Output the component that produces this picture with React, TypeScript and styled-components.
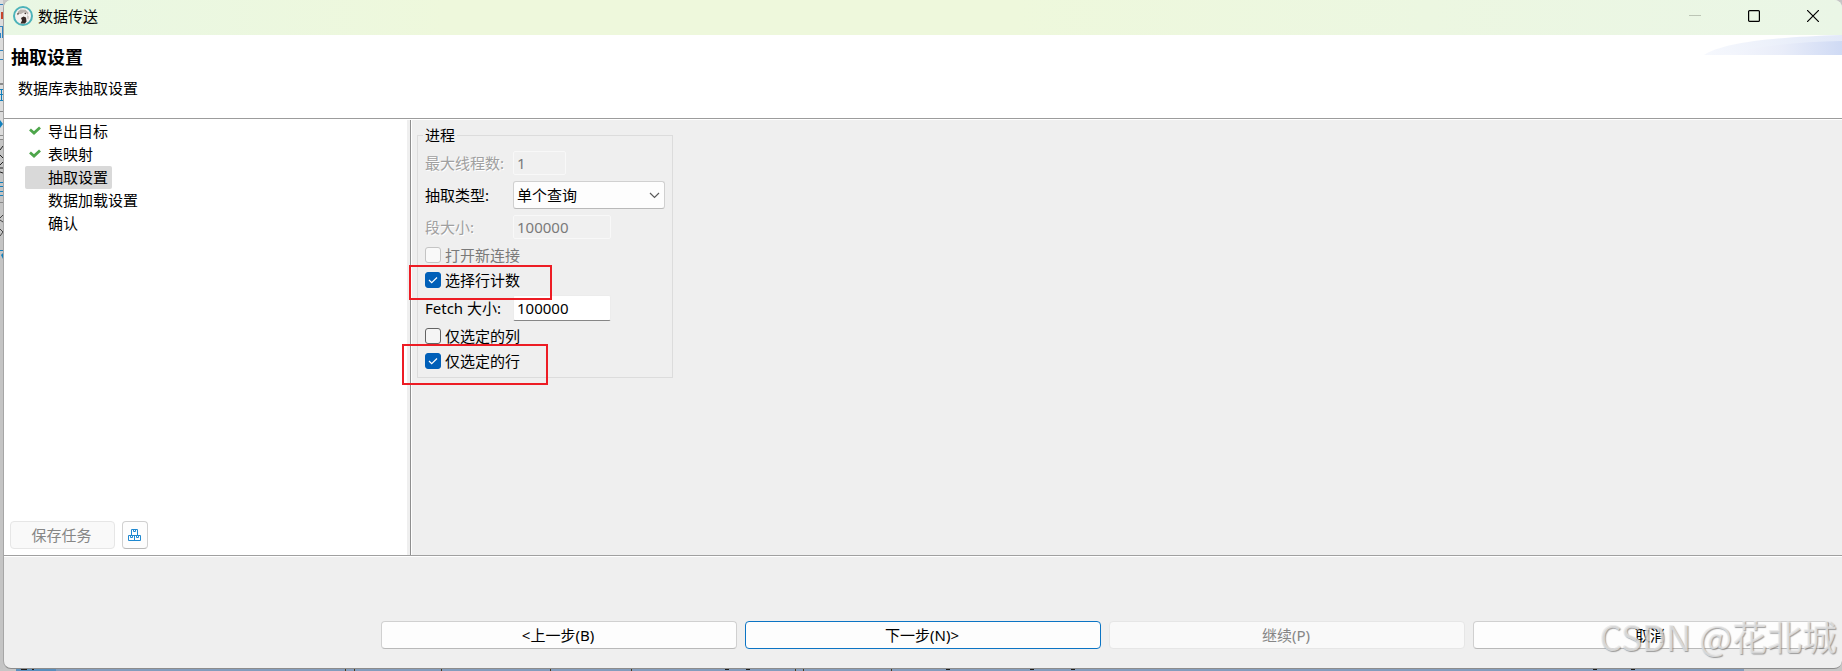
import React from "react";
import styled, { createGlobalStyle, css } from "styled-components";

const GlobalStyle = createGlobalStyle`
  * { box-sizing: border-box; }
  body {
    margin: 0;
    font-family: "Noto Sans", "Noto Sans CJK SC", sans-serif;
    font-size: 15px;
    line-height: 20px;
    color: #000;
  }
  button, input, select { font: inherit; color: inherit; margin: 0; }
`;

const Desktop = styled.div`
  display: grid;
  grid-template-columns: 3px minmax(0, 1fr);
  grid-template-rows: minmax(0, 1fr) 2px;
  min-height: 100vh;
  overflow: hidden;
  background: #c6c6c6;
`;

const LeftEdge = styled.svg`
  display: block;
  width: 3px;
  height: 669px;
`;

const BottomEdge = styled.svg`
  display: block;
  grid-column: 1 / -1;
  width: 100%;
  height: 2px;
`;

const Window = styled.div`
  display: flex;
  flex-direction: column;
  background: #efefef;
  border-left: 1px solid #a6a6a6;
  border-bottom: 1px solid #8c8c8c;
  border-radius: 8px;
  overflow: hidden;
`;

const TitleBar = styled.header`
  display: flex;
  align-items: center;
  height: 35px;
  padding: 0 14px 4px 9px;
  gap: 5px;
  background: linear-gradient(90deg, #e9f7e4 0%, #eef8dc 24%, #eef8dc 55%, #eaf6e6 100%);
`;

const Title = styled.span`
  flex: 1;
`;

const WindowControls = styled.div`
  display: flex;
  gap: 29px;
`;

const ControlButton = styled.button`
  display: grid;
  place-items: center;
  width: 30px;
  height: 20px;
  padding: 0;
  border: 0;
  background: none;
`;

const Heading = styled.section`
  display: flex;
  justify-content: space-between;
  height: 85px;
  background: #fff;
  border-bottom: 1px solid #fff;
  box-shadow: inset 0 -1px #9c9c9c;
`;

const HeadingText = styled.div`
  padding-top: 9px;
`;

const HeadingTitle = styled.h1`
  margin: 0;
  padding-left: 7px;
  font-family: "Noto Sans CJK SC", sans-serif;
  font-size: 18px;
  line-height: 24px;
  font-weight: bold;
`;

const HeadingNote = styled.p`
  margin: 10px 0 0;
  padding-left: 14px;
`;

const Body = styled.div`
  display: flex;
  flex: 1;
`;

const Sidebar = styled.aside`
  display: flex;
  flex-direction: column;
  justify-content: space-between;
  width: 403px;
  background: #fff;
`;

const Sash = styled.div`
  width: 5px;
  border-right: 1px solid #fff;
  box-shadow: inset -1px 0 #8f8f8f;
`;

const Steps = styled.ul`
  margin: 0;
  padding: 0 0 0 21px;
  list-style: none;
`;

const StepButton = styled.button<{ $current?: boolean }>`
  display: grid;
  grid-template-columns: 13px auto;
  gap: 6px;
  align-items: center;
  height: 23px;
  padding: 0 4px 2px;
  border: 0;
  border-radius: 2px;
  background: ${(p) => (p.$current ? "#d9d9d9" : "none")};
`;

const PushButton = styled.button<{ $primary?: boolean }>`
  display: grid;
  place-items: center;
  height: 28px;
  padding: 0 2px 0 0;
  background: #fdfdfd;
  border: 1px solid #d0d0d0;
  border-bottom-color: #b9b9b9;
  border-radius: 4px;
  ${(p) =>
    p.$primary &&
    css`
      border-color: #0b74c4;
    `}
  &:disabled {
    color: #868686;
    background: #f9f9f9;
    border-color: #e6e6e6;
  }
`;

const TaskBar = styled.div`
  display: grid;
  grid-template-columns: 105px 26px;
  gap: 7px;
  padding: 0 6px 6px;
`;

const Main = styled.main`
  flex: 1;
  padding: 5px;
`;

const Group = styled.fieldset`
  width: 256px;
  margin: 0;
  padding: 5px 5px 6px;
  border: 1px solid #dcdcdc;
`;

const GroupTitle = styled.legend`
  padding: 0 2px;
`;

const Rows = styled.div`
  display: grid;
  gap: 5px;
  padding: 0 2px;
`;

const Row = styled.div<{ $size: "field" | "select" | "check" }>`
  position: relative;
  display: flex;
  align-items: center;
  height: ${(p) => ({ field: 26, select: 28, check: 20 })[p.$size]}px;
`;

const FieldLabel = styled.label<{ $disabled?: boolean }>`
  width: 88px;
  ${(p) =>
    p.$disabled &&
    css`
      color: #a0a0a0;
      text-shadow: 1px 1px #fff;
    `}
`;

const TextInput = styled.input<{ $short?: boolean }>`
  width: ${(p) => (p.$short ? 53 : 98)}px;
  height: 26px;
  padding: 0 3px;
  border: 1px solid #ececec;
  border-bottom-color: #868686;
  border-radius: 2px;
  background: #fff;
  &:disabled {
    height: 24px;
    color: #7a7a7a;
    background: #f0f0f0;
    border-color: #f8f8f8;
  }
`;

const SelectBox = styled.span`
  display: grid;
  align-items: center;
  width: 152px;
  > * {
    grid-area: 1 / 1;
  }
  > svg {
    justify-self: end;
    margin-right: 5px;
    pointer-events: none;
  }
`;

const Select = styled.select`
  appearance: none;
  width: 100%;
  height: 28px;
  padding: 0 3px;
  border: 1px solid #d0d0d0;
  border-bottom-color: #b9b9b9;
  border-radius: 3px;
  background: #fdfdfd;
`;

const CheckLabel = styled.label<{ $disabled?: boolean }>`
  display: flex;
  align-items: center;
  gap: 4px;
  color: ${(p) => (p.$disabled ? "#7a7a7a" : "#000")};
`;

const CheckBox = styled.span`
  display: grid;
  > * {
    grid-area: 1 / 1;
  }
  > svg {
    pointer-events: none;
  }
`;

const CheckInput = styled.input`
  appearance: none;
  width: 16px;
  height: 16px;
  border: 1px solid #636363;
  border-radius: 3px;
  background: #f5f5f5;
  &:disabled {
    border-color: #c4c4c4;
    background: #f9f9f9;
  }
  &:checked {
    border-color: #005fb8;
    background: #005fb8;
  }
`;

const Callout = styled.span<{ $wide?: boolean }>`
  position: absolute;
  z-index: 1;
  top: ${(p) => (p.$wide ? -7 : -5)}px;
  left: ${(p) => (p.$wide ? -23 : -16)}px;
  width: ${(p) => (p.$wide ? 146 : 143)}px;
  height: ${(p) => (p.$wide ? 41 : 35)}px;
  border: 2px solid #ed1c24;
  pointer-events: none;
`;

const Footer = styled.footer`
  position: relative;
  display: grid;
  grid-template-columns: repeat(4, minmax(0, 1fr));
  gap: 8px;
  padding: 65px 13px 19px 377px;
  border-top: 1px solid #a0a0a0;
  box-shadow: inset 0 1px #fff;
`;

const Watermark = styled.span`
  position: absolute;
  right: 5px;
  bottom: 12px;
  font-family: "Noto Sans CJK SC", sans-serif;
  font-size: 35px;
  line-height: 40px;
  color: rgba(232, 232, 232, 0.75);
  text-shadow: 1px 1px 1px rgba(110, 110, 110, 0.65);
  white-space: nowrap;
  pointer-events: none;
`;

const Logo = () => (
  <svg width="20" height="20" viewBox="0 0 20 20" aria-hidden="true">
    <circle cx="10" cy="10" r="9" fill="#f4f1ee" stroke="#4db3b9" strokeWidth="2" />
    <path d="M4.500 6 7.500 3.500l5 .3 3 3-.5 2-2-1.800-2.500-.5L8 8 6 8Z" fill="#b9b3ad" />
    <path d="M8 12 10.500 10.500l2.500 1 .5 4L12 17.500H7.500l1.500-3Z" fill="#352824" />
    <path d="m4 7.500 1.500-1 .5 1.600-1.300 1.200Z" fill="#6b5a52" />
    <circle cx="12.300" cy="7.500" r=".8" fill="#3d302b" />
    <path d="m14 9 2 1.500-.5 3-1.500-1Z" fill="#cfc9c4" />
  </svg>
);

const Swoosh = () => (
  <svg width="140" height="20" viewBox="0 0 140 20" aria-hidden="true">
    <defs>
      <linearGradient id="outer" x1="0" x2="1">
        <stop offset="0" stopColor="#f6f8fd" />
        <stop offset="1" stopColor="#e2e9f8" />
      </linearGradient>
      <linearGradient id="inner" x1="0" x2="1">
        <stop offset="0" stopColor="#f5f7fd" />
        <stop offset="0.500" stopColor="#e9edf9" />
        <stop offset="1" stopColor="#cfdaf4" />
      </linearGradient>
    </defs>
    <path d="M2 20C20 8 70 2 140 0v20Z" fill="url(#outer)" />
    <path d="M20 20C50 12 90 7 140 6v14Z" fill="url(#inner)" />
  </svg>
);

const DoneMark = () => (
  <svg width="12" height="9" viewBox="0 0 12 9" aria-hidden="true">
    <path d="m1 3.500 4 3.500L11 1.500" fill="none" stroke="#4ea64b" strokeWidth="2.800" />
  </svg>
);

const BoxesIcon = () => (
  <svg width="13" height="13" viewBox="0 0 13 13" fill="none" stroke="#1e88d0" aria-hidden="true">
    <path d="M3.500.5h6v6h-6zM5.500.5v2h2v-2M.5 6.500h12v5H.5zM6.500 6.500v5M2.500 6.500v2h2v-2M8.500 6.500v2h2v-2" />
  </svg>
);

const Tick = () => (
  <svg width="16" height="16" viewBox="0 0 16 16" aria-hidden="true">
    <path d="m4 8 2.700 2.700L12 5.500" fill="none" stroke="#fff" strokeWidth="1.200" />
  </svg>
);

const Chevron = () => (
  <svg width="11" height="7" viewBox="0 0 11 7" aria-hidden="true">
    <path d="m1 1 4.500 4.500L10 1" fill="none" stroke="#5a5a5a" strokeWidth="1.200" />
  </svg>
);

const GRID_LINES = [345, 354, 441, 550, 631, 795, 803, 891];
const DESCENDERS = [725, 746, 946, 1030, 1071, 1593, 1631];

const steps = [
  { name: "导出目标", done: true },
  { name: "表映射", done: true },
  { name: "抽取设置", current: true },
  { name: "数据加载设置" },
  { name: "确认" },
];

interface CheckProps {
  label: string;
  checked?: boolean;
  disabled?: boolean;
}

const Check = ({ label, checked, disabled }: CheckProps) => (
  <CheckLabel $disabled={disabled}>
    <CheckBox>
      <CheckInput type="checkbox" defaultChecked={checked} disabled={disabled} />
      {checked && <Tick />}
    </CheckBox>
    {label}
  </CheckLabel>
);

export default function App() {
  return (
    <>
      <GlobalStyle />
      <Desktop>
        <LeftEdge viewBox="0 0 3 669" aria-hidden="true">
          <path d="M0 0h3v140H0z" fill="#dcdcdc" />
          <path d="M0 140h3v529H0z" fill="#c4c4c4" />
          <path d="M1 12h2v7H1z" fill="#c8452c" />
          <path d="M0 4h3v1H0zM0 26h3v1H0zM0 50h3v1H0zM0 59h3v1H0zM2 27h1v11H2zM0 33h1v5H0z" fill="#2d84c0" />
          <path d="M0 83h3v2H0z" fill="#8a8a8a" />
          <path d="M0 89h3v1H0zM0 94h3v1H0zM0 100h3v1H0zM1 89h1v12H1zM0 120l3 4-3 4z" fill="#1180bd" />
          <path d="M0 111h3v1H0zM0 135h3v1H0zM0 139h3v1H0zM0 202h3v1H0z" fill="#8a8a8a" />
          <path d="m0 150 3-4M0 155l3 3M0 165l3-3M0 168h3M0 172l3 1" stroke="#222" />
          <path d="M0 182h3v1H0zM0 186h3v1H0zM0 191h3v1H0zM0 195h3v1H0zM0 250h3v1H0zM1 255l2-2v6z" fill="#1180bd" />
          <path d="m0 218 3-3M0 220l3 2M0 229l3 3-3 4" fill="none" stroke="#444" />
        </LeftEdge>
        <Window>
          <TitleBar>
            <Logo />
            <Title>数据传送</Title>
            <WindowControls>
              <ControlButton aria-label="最小化" disabled>
                <svg width="12" height="12" viewBox="0 0 12 12">
                  <path d="M0 5.500h12" stroke="#bcc5b5" />
                </svg>
              </ControlButton>
              <ControlButton aria-label="最大化">
                <svg width="12" height="12" viewBox="0 0 12 12">
                  <rect x=".6" y=".6" width="10.800" height="10.800" rx="1" fill="none" stroke="#000" strokeWidth="1.200" />
                </svg>
              </ControlButton>
              <ControlButton aria-label="关闭">
                <svg width="12" height="12" viewBox="0 0 12 12">
                  <path d="m0 0 12 12M12 0 0 12" stroke="#000" strokeWidth="1.200" />
                </svg>
              </ControlButton>
            </WindowControls>
          </TitleBar>
          <Heading>
            <HeadingText>
              <HeadingTitle>抽取设置</HeadingTitle>
              <HeadingNote>数据库表抽取设置</HeadingNote>
            </HeadingText>
            <Swoosh />
          </Heading>
          <Body>
            <Sidebar>
              <Steps>
                {steps.map((s) => (
                  <li key={s.name}>
                    <StepButton $current={s.current}>
                      {s.done ? <DoneMark /> : <span />}
                      {s.name}
                    </StepButton>
                  </li>
                ))}
              </Steps>
              <TaskBar>
                <PushButton disabled>保存任务</PushButton>
                <PushButton aria-label="任务">
                  <BoxesIcon />
                </PushButton>
              </TaskBar>
            </Sidebar>
            <Sash />
            <Main>
              <Group>
                <GroupTitle>进程</GroupTitle>
                <Rows>
                  <Row $size="field">
                    <FieldLabel htmlFor="threads" $disabled>
                      最大线程数:
                    </FieldLabel>
                    <TextInput id="threads" defaultValue="1" disabled $short />
                  </Row>
                  <Row $size="select">
                    <FieldLabel htmlFor="extract">抽取类型:</FieldLabel>
                    <SelectBox>
                      <Select id="extract">
                        <option>单个查询</option>
                      </Select>
                      <Chevron />
                    </SelectBox>
                  </Row>
                  <Row $size="field">
                    <FieldLabel htmlFor="segment" $disabled>
                      段大小:
                    </FieldLabel>
                    <TextInput id="segment" defaultValue="100000" disabled />
                  </Row>
                  <Row $size="check">
                    <Check label="打开新连接" disabled />
                  </Row>
                  <Row $size="check">
                    <Check label="选择行计数" checked />
                    <Callout />
                  </Row>
                  <Row $size="field">
                    <FieldLabel htmlFor="fetch">Fetch 大小:</FieldLabel>
                    <TextInput id="fetch" defaultValue="100000" />
                  </Row>
                  <Row $size="check">
                    <Check label="仅选定的列" />
                  </Row>
                  <Row $size="check">
                    <Check label="仅选定的行" checked />
                    <Callout $wide />
                  </Row>
                </Rows>
              </Group>
            </Main>
          </Body>
          <Footer>
            <PushButton>&lt;上一步(B)</PushButton>
            <PushButton $primary>下一步(N)&gt;</PushButton>
            <PushButton disabled>继续(P)</PushButton>
            <PushButton>取消</PushButton>
            <Watermark>CSDN @花北城</Watermark>
          </Footer>
        </Window>
        <BottomEdge viewBox="0 0 1842 2" preserveAspectRatio="none" aria-hidden="true">
          <path d="M16 0h40v2H16z" fill="#5a8fbd" />
          <path d="M56 0h1688v2H56z" fill="#849dbd" />
          <path d="M21 0h6v1h-6zM32 0h2v1h-2z" fill="#1d1d1d" />
          {GRID_LINES.map((x) => (
            <path key={x} d={`M${x} 0h1v2h-1z`} fill="#4a3a1c" />
          ))}
          {DESCENDERS.map((x) => (
            <path key={x} d={`M${x} 0h4v1h-4z`} fill="#1d1d1d" />
          ))}
        </BottomEdge>
      </Desktop>
    </>
  );
}
